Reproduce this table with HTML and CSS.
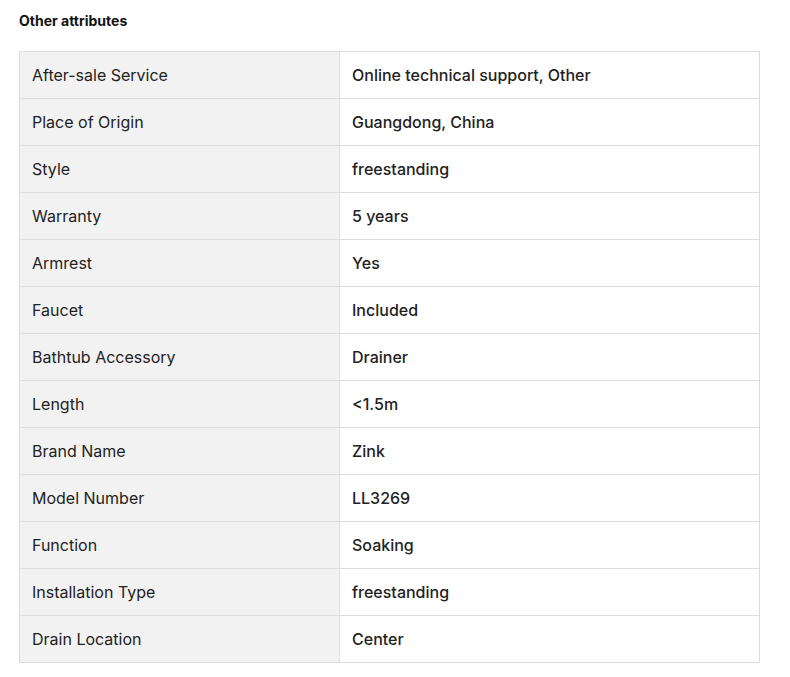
FILE: index.html
```html
<!DOCTYPE html>
<html>
<head>
<meta charset="utf-8">
<link rel="stylesheet" href="styles.css">
</head>
<body>
<div class="attrs">
  <h3 class="attrs-title">Other attributes</h3>
  <table class="attrs-table">
    <tr><td class="k">After-sale Service</td><td class="v">Online technical support, Other</td></tr>
    <tr><td class="k">Place of Origin</td><td class="v">Guangdong, China</td></tr>
    <tr><td class="k">Style</td><td class="v">freestanding</td></tr>
    <tr><td class="k">Warranty</td><td class="v">5 years</td></tr>
    <tr><td class="k">Armrest</td><td class="v">Yes</td></tr>
    <tr><td class="k">Faucet</td><td class="v">Included</td></tr>
    <tr><td class="k">Bathtub Accessory</td><td class="v">Drainer</td></tr>
    <tr><td class="k">Length</td><td class="v">&lt;1.5m</td></tr>
    <tr><td class="k">Brand Name</td><td class="v">Zink</td></tr>
    <tr><td class="k">Model Number</td><td class="v">LL3269</td></tr>
    <tr><td class="k">Function</td><td class="v">Soaking</td></tr>
    <tr><td class="k">Installation Type</td><td class="v">freestanding</td></tr>
    <tr><td class="k">Drain Location</td><td class="v">Center</td></tr>
  </table>
</div>
</body>
</html>
```
FILE: styles.css
```css
html, body {
  margin: 0;
  padding: 0;
  background: #fff;
}
body {
  font-family: Inter, "Noto Sans", sans-serif;
  color: #222;
}
.attrs {
  padding: 11px 19px 0 19px;
}
.attrs-title {
  margin: 0 0 20px 0;
  font-size: 14px;
  line-height: 20px;
  font-weight: 700;
  color: #111;
}
.attrs-table {
  border-collapse: collapse;
  width: 741px;
  font-size: 16px;
  line-height: 20px;
}
.attrs-table td {
  border: 1px solid #dcdcdc;
  padding: 13px 12px;
  text-align: left;
  vertical-align: middle;
}
.attrs-table .k {
  width: 295px;
  background: #f2f2f2;
}
.attrs-table .v {
  background: #fff;
  font-weight: 500;
}
```
